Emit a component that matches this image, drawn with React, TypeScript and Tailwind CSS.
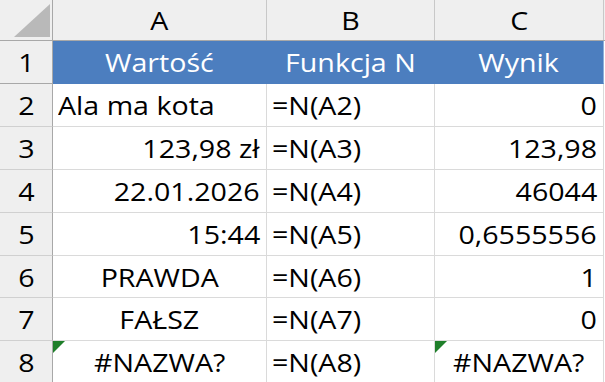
import React from 'react';

type Align = 'left' | 'right' | 'center';

interface Cell {
  text: string;
  align: Align;
  flag?: boolean;
}

const rows: { n: number; h: string; cells: Cell[] }[] = [
  { n: 2, h: 'h-[43px]', cells: [{ text: 'Ala ma kota', align: 'left' }, { text: '=N(A2)', align: 'left' }, { text: '0', align: 'right' }] },
  { n: 3, h: 'h-[43px]', cells: [{ text: '123,98 zł', align: 'right' }, { text: '=N(A3)', align: 'left' }, { text: '123,98', align: 'right' }] },
  { n: 4, h: 'h-[43px]', cells: [{ text: '22.01.2026', align: 'right' }, { text: '=N(A4)', align: 'left' }, { text: '46044', align: 'right' }] },
  { n: 5, h: 'h-[43px]', cells: [{ text: '15:44', align: 'right' }, { text: '=N(A5)', align: 'left' }, { text: '0,6555556', align: 'right' }] },
  { n: 6, h: 'h-[42px]', cells: [{ text: 'PRAWDA', align: 'center' }, { text: '=N(A6)', align: 'left' }, { text: '1', align: 'right' }] },
  { n: 7, h: 'h-[43px]', cells: [{ text: 'FAŁSZ', align: 'center' }, { text: '=N(A7)', align: 'left' }, { text: '0', align: 'right' }] },
  { n: 8, h: 'h-[42px]', cells: [{ text: '#NAZWA?', align: 'center', flag: true }, { text: '=N(A8)', align: 'left' }, { text: '#NAZWA?', align: 'center', flag: true }] },
];

const widths = ['w-[214px]', 'w-[168px]', 'w-[169px]'];

// excel text looks a bit stretched, so widen the glyphs from the anchored side
const alignClass: Record<Align, string> = {
  left: 'justify-start pl-[5px]',
  right: 'justify-end pr-[6px]',
  center: 'justify-center',
};
const originClass: Record<Align, string> = {
  left: 'origin-left',
  right: 'origin-right',
  center: 'origin-center',
};

const Txt: React.FC<{ align?: Align; children: React.ReactNode }> = ({ align = 'center', children }) => (
  <span className={`inline-block scale-x-110 ${originClass[align]}`}>{children}</span>
);

const App: React.FC = () => {
  return (
    <div className="w-[605px] h-[382px] bg-white overflow-hidden text-[26px] text-black leading-none" style={{ fontFamily: '"Open Sans", "Noto Sans", sans-serif' }}>
      {/* column headers */}
      <div className="flex h-[41px] bg-[#efefef] border-b border-[#a8a8a8]">
        <div className="relative w-[53px] border-r border-[#a8a8a8]">
          <svg className="absolute left-[14px] top-[4px]" width="36" height="33" viewBox="0 0 36 33">
            <polygon points="36,0 36,33 0,33" fill="#b9b9b9" />
          </svg>
        </div>
        {['A', 'B', 'C'].map((c, i) => (
          <div key={c} className={`${widths[i]} flex items-center justify-center border-r border-[#c8c8c8]`}>
            <Txt>{c}</Txt>
          </div>
        ))}
      </div>

      {/* header row */}
      <div className="flex h-[43px]">
        <div className="w-[53px] flex items-center justify-center bg-[#efefef] border-r border-b border-[#a8a8a8]">
          <Txt>1</Txt>
        </div>
        {['Wartość', 'Funkcja N', 'Wynik'].map((t, i) => (
          <div key={t} className={`${widths[i]} flex items-center justify-center bg-[#4c7ebf] text-white border-b border-[#4c7ebf] ${i < 2 ? 'border-r border-r-[#4c7ebf]' : 'border-r border-r-[#8fb0da]'}`}>
            <Txt>{t}</Txt>
          </div>
        ))}
      </div>

      {rows.map((r) => (
        <div key={r.n} className={`flex ${r.h}`}>
          <div className="w-[53px] flex items-center justify-center bg-[#efefef] border-r border-b border-[#a8a8a8] border-b-[#d0d0d0]">
            <Txt>{r.n}</Txt>
          </div>
          {r.cells.map((c, i) => (
            <div key={i} className={`relative ${widths[i]} flex items-center ${alignClass[c.align]} border-r border-b border-[#dadada] whitespace-nowrap`}>
              {c.flag && (
                <svg className="absolute left-0 top-0" width="12" height="12" viewBox="0 0 12 12">
                  <polygon points="0,0 12,0 0,12" fill="#1f7f2a" />
                </svg>
              )}
              <Txt align={c.align}>{c.text}</Txt>
            </div>
          ))}
        </div>
      ))}
    </div>
  );
};

export default App;
